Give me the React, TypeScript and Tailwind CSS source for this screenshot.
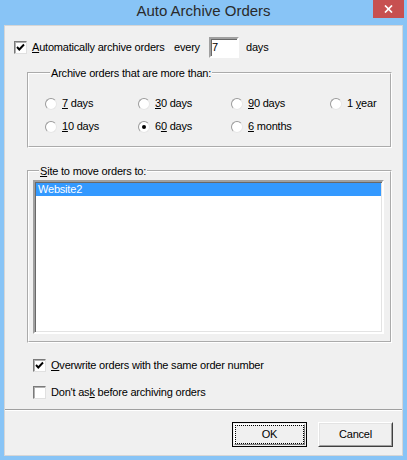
import React from 'react';

const font = { fontFamily: '"Liberation Sans", Arial, sans-serif' };

const CheckBox: React.FC<{ checked?: boolean }> = ({ checked }) => (
  <span className="relative flex h-[13px] w-[13px] shrink-0 items-center justify-center border border-t-[#7a7a7a] border-l-[#7a7a7a] border-r-[#e0e0e0] border-b-[#e0e0e0] bg-white shadow-[inset_1px_1px_0_#b0b0b0]">
    {checked && (
      <svg width="9" height="9" viewBox="0 0 9 9">
        <path d="M1 4 L3.3 6.5 L8 1.5" fill="none" stroke="#000" strokeWidth="1.9" />
      </svg>
    )}
  </span>
);

const Radio: React.FC<{ checked?: boolean; label: React.ReactNode }> = ({ checked, label }) => (
  <div className="flex h-[23px] items-center gap-[5px]">
    <span className="flex h-[12px] w-[12px] shrink-0 items-center justify-center rounded-full border border-t-[#9a9a9a] border-l-[#9a9a9a] border-r-[#e6e6e6] border-b-[#e6e6e6] bg-white">
      {checked && <span className="h-[4px] w-[4px] rounded-full bg-black" />}
    </span>
    <span>{label}</span>
  </div>
);

export default function App() {
  return (
    <div
      className="flex h-[460px] w-[407px] flex-col bg-[#88c4f6] text-[11px] tracking-[-0.2px] text-black"
      style={font}
    >
      {/* title bar */}
      <div className="relative flex h-[25px] shrink-0 items-center justify-center pb-[2px]">
        <span className="text-[15px] tracking-normal text-[#2a2a2a]">Auto Archive Orders</span>
        <div className="absolute right-[3px] top-0 flex h-[18px] w-[31px] items-center justify-center bg-[#c75050]">
          <svg width="9" height="8" viewBox="0 0 9 8">
            <path d="M1 0.5 L8 7.5 M8 0.5 L1 7.5" stroke="#fff" strokeWidth="1.7" />
          </svg>
        </div>
      </div>

      {/* client area */}
      <div className="mx-[4px] mb-[4px] flex flex-1 flex-col border border-[#d6d6d6] bg-[#f0f0f0]">
        <div className="ml-[9px] mt-[11px] flex h-[21px] items-center">
          <CheckBox checked />
          <span className="ml-[5px] w-[142px]">
            <u>A</u>utomatically archive orders
          </span>
          <span className="w-[35px]">every</span>
          <div className="flex h-[21px] w-[30px] items-center border-2 border-t-[#a0a0a0] border-l-[#a0a0a0] border-r-white border-b-white bg-white pl-[1px] shadow-[inset_1px_1px_0_#696969]">
            7
          </div>
          <span className="ml-[7px]">days</span>
        </div>

        <fieldset className="ml-[22px] mt-[8px] w-[365px] border-2 border-white pb-[8px] pl-[16px] pt-[12px] [border-style:groove]">
          <legend className="ml-[5px] px-[1px] leading-[14px]">Archive orders that are more than:</legend>
          <div className="grid grid-cols-[93px_93px_99px_auto]">
            <Radio label={<><u>7</u> days</>} />
            <Radio label={<><u>3</u>0 days</>} />
            <Radio label={<><u>9</u>0 days</>} />
            <Radio label={<>1 <u>y</u>ear</>} />
            <Radio label={<><u>1</u>0 days</>} />
            <Radio checked label={<>6<u>0</u> days</>} />
            <Radio label={<><u>6</u> months</>} />
          </div>
        </fieldset>

        <fieldset className="ml-[22px] mt-[16px] w-[365px] border-2 border-white pb-[7px] pl-[4px] pr-[6px] pt-[2px] [border-style:groove]">
          <legend className="ml-[6px] px-[1px] leading-[14px]">
            <u>S</u>ite to move orders to:
          </legend>
          <div className="h-[154px] border-2 border-t-[#a0a0a0] border-l-[#a0a0a0] border-r-white border-b-white bg-white shadow-[inset_1px_1px_0_#696969,inset_-1px_-1px_0_#e3e3e3]">
            <div className="mx-[1px] mt-[1px] flex h-[13px] items-center bg-[#3399ff] pl-[2px] text-white">
              Website2
            </div>
          </div>
        </fieldset>

        <div className="ml-[28px] mt-[14px] flex h-[16px] items-center gap-[5px]">
          <CheckBox checked />
          <span>
            <u>O</u>verwrite orders with the same order number
          </span>
        </div>
        <div className="ml-[28px] mt-[11px] flex h-[16px] items-center gap-[5px]">
          <CheckBox />
          <span>
            Don't as<u>k</u> before archiving orders
          </span>
        </div>

        <div className="mt-[9px] border-t border-b border-t-[#a0a0a0] border-b-white" />

        <div className="flex justify-end gap-[11px] pr-[9px] pt-[11px]">
          <button className="flex h-[25px] w-[75px] items-center justify-center border border-black bg-[#f0f0f0] p-[1px]">
            <span className="flex h-full w-full items-center justify-center border border-t-white border-l-white border-r-[#808080] border-b-[#808080]">
              <span className="flex h-full w-full items-center justify-center border border-dotted border-black">OK</span>
            </span>
          </button>
          <button className="flex h-[25px] w-[75px] items-center justify-center border border-t-white border-l-white border-r-[#404040] border-b-[#404040] bg-[#f0f0f0]">
            <span className="flex h-full w-full items-center justify-center border border-t-[#e3e3e3] border-l-[#e3e3e3] border-r-[#a0a0a0] border-b-[#a0a0a0]">
              Cancel
            </span>
          </button>
        </div>
      </div>
    </div>
  );
}
